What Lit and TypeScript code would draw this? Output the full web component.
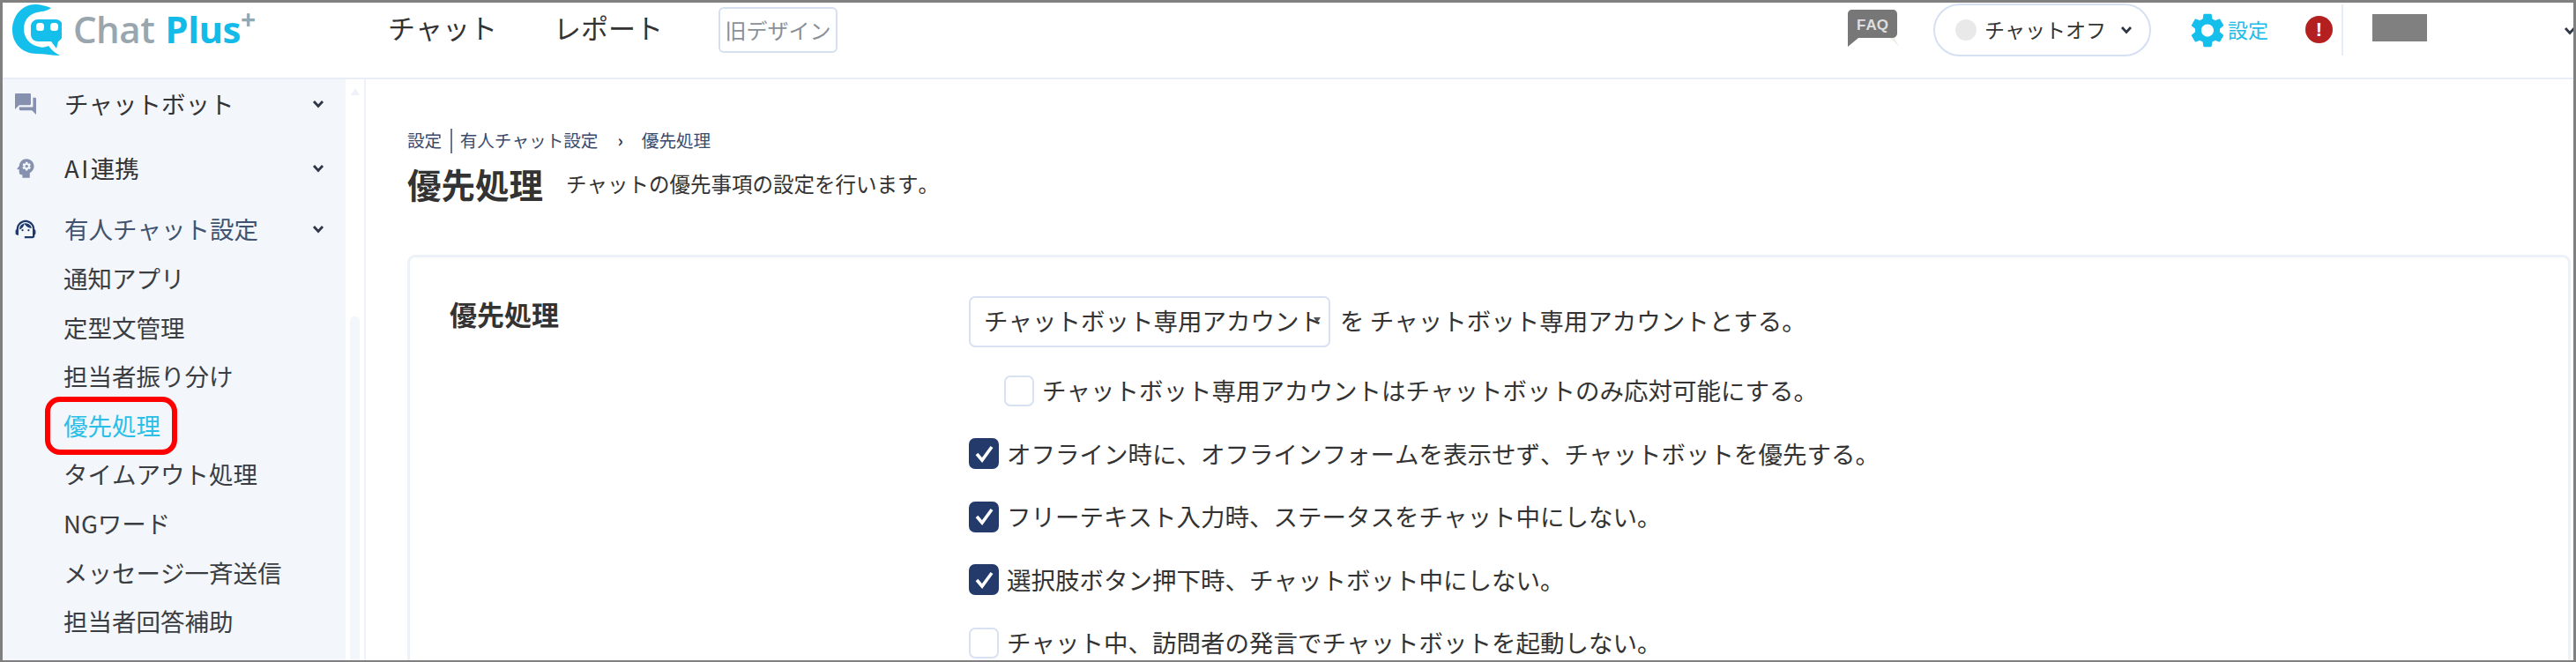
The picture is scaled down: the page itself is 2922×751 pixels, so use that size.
import { LitElement, html, css, svg } from "lit";
import { customElement } from "lit/decorators.js";

const chev = (cls = "") => html`<svg class="chev ${cls}" viewBox="0 0 14 10"><polyline points="2,2 7,7.5 12,2" fill="none" stroke="currentColor" stroke-width="2.8"/></svg>`;

const GEAR = "M19.14 12.94c.04-.3.06-.61.06-.94 0-.32-.02-.64-.07-.94l2.03-1.58c.18-.14.23-.41.12-.61l-1.92-3.32c-.12-.22-.37-.29-.59-.22l-2.39.96c-.5-.38-1.03-.7-1.62-.94l-.36-2.54c-.04-.24-.24-.41-.48-.41h-3.84c-.24 0-.43.17-.47.41l-.36 2.54c-.59.24-1.13.57-1.62.94l-2.39-.96c-.22-.08-.47 0-.59.22L2.74 8.87c-.12.21-.08.47.12.61l2.03 1.58c-.05.3-.09.63-.09.94s.02.64.07.94l-2.03 1.58c-.18.14-.23.41-.12.61l1.92 3.32c.12.22.37.29.59.22l2.39-.96c.5.38 1.03.7 1.62.94l.36 2.54c.05.24.24.41.48.41h3.84c.24 0 .44-.17.47-.41l.36-2.54c.59-.24 1.13-.56 1.62-.94l2.39.96c.22.08.47 0 .59-.22l1.92-3.32c.12-.22.07-.47-.12-.61l-2.01-1.58zM12 15.6c-1.98 0-3.6-1.62-3.6-3.6s1.62-3.6 3.6-3.6 3.6 1.62 3.6 3.6-1.62 3.6-3.6 3.6z";

const ICONS = {
  forum: svg`<path fill="#8591ae" d="M21 6h-2v9H6v2c0 .55.45 1 1 1h11l4 4V7c0-.55-.45-1-1-1zm-4 6V3c0-.55-.45-1-1-1H3c-.55 0-1 .45-1 1v14l4-4h10c.55 0 1-.45 1-1z"/>`,
  ai: svg`<path fill="#8591ae" d="M13 8.57c-.79 0-1.43.64-1.43 1.43s.64 1.43 1.43 1.43 1.43-.64 1.43-1.43-.64-1.43-1.43-1.43z"/><path fill="#8591ae" d="M13 3C9.25 3 6.2 5.94 6.02 9.64L4.1 12.2c-.25.33 0 .8.4.8H6v3c0 1.1.9 2 2 2h1v3h7v-4.68c2.36-1.12 4-3.53 4-6.32 0-3.87-3.13-7-7-7zm3 7c0 .13-.01.26-.02.39l.83.66c.08.06.1.16.05.25l-.8 1.39c-.05.09-.16.12-.24.09l-.99-.4c-.21.16-.43.29-.67.39L14 13.83c-.01.1-.1.17-.2.17h-1.6c-.1 0-.18-.07-.2-.17l-.15-1.06c-.25-.1-.47-.23-.68-.39l-.99.4c-.09.03-.2 0-.25-.09l-.8-1.39c-.05-.08-.03-.19.05-.25l.84-.66c-.01-.13-.02-.26-.02-.39s.02-.27.04-.39l-.85-.66c-.08-.06-.1-.16-.05-.26l.8-1.38c.05-.09.15-.12.24-.09l1 .4c.2-.15.43-.29.67-.39L12 6.17c.02-.1.1-.17.2-.17h1.6c.1 0 .18.07.2.17l.15 1.06c.24.1.46.23.67.39l1-.4c.09-.03.2 0 .24.09l.8 1.38c.05.09.03.2-.05.26l-.85.66c.03.12.04.25.04.39z"/>`,
  agent: svg`<path fill="#1f3a6b" d="M21 12.22C21 6.73 16.74 3 12 3c-4.69 0-9 3.65-9 9.28-.6.34-1 .98-1 1.72v2c0 1.1.9 2 2 2h1v-6.1c0-3.87 3.13-7 7-7s7 3.13 7 7V19h-8v2h8c1.1 0 2-.9 2-2v-1.22c.59-.31 1-.92 1-1.62v-2.3c0-.7-.41-1.31-1-1.64z"/><circle cx="9" cy="13" r="1" fill="#1f3a6b"/><circle cx="15" cy="13" r="1" fill="#1f3a6b"/><path fill="#1f3a6b" d="M18 11.03C17.52 8.18 15.04 6 12.05 6c-3.03 0-6.29 2.51-6.03 6.45 2.47-1.01 4.33-3.21 4.86-5.89 1.31 2.63 4 4.44 7.12 4.47z"/>`,
};

const SUB = ["通知アプリ", "定型文管理", "担当者振り分け", "優先処理", "タイムアウト処理", "NGワード", "メッセージ一斉送信", "担当者回答補助"];
const CHECKS: [string, boolean][] = [
  ["オフライン時に、オフラインフォームを表示せず、チャットボットを優先する。", true],
  ["フリーテキスト入力時、ステータスをチャット中にしない。", true],
  ["選択肢ボタン押下時、チャットボット中にしない。", true],
  ["チャット中、訪問者の発言でチャットボットを起動しない。", false],
];

@customElement("app-root")
export class AppRoot extends LitElement {
  static styles = css`
    :host {
      display: block; width: 2922px; height: 751px; box-sizing: border-box;
      border: 3px solid #808080; border-bottom-width: 2px; overflow: hidden; background: #fff;
      font-family: "Noto Sans CJK JP", "Noto Sans", sans-serif; color: #333;
      font-kerning: none; text-spacing-trim: space-all;
    }
    * { box-sizing: border-box; }
    .chev { display: block; width: 14px; height: 10px; color: #2f3747; flex: none; }

    header { display: flex; align-items: flex-start; height: 87px; border-bottom: 2px solid #e8edf6; flex: none; }
    .logo { display: flex; margin: 2px 0 0 11px; width: 426px; flex: none; }
    .logo svg { width: 56px; height: 58px; flex: none; }
    .logotext { margin: 2px 0 0 13px; font-family: "Open Sans", sans-serif; font-size: 42px; line-height: 52px; display: flex; align-items: flex-start; font-kerning: normal; letter-spacing: -0.5px; }
    .logotext .c { font-weight: 600; color: #9aa6ad; }
    .logotext .p { font-weight: 700; color: #14bbe8; margin-left: 12px; }
    .logotext .s { font-weight: 700; color: #8fa9b3; font-size: 30px; line-height: 30px; margin-top: 0; }
    .nav { font-size: 31px; line-height: 44px; margin-top: 6px; color: #333; flex: none; }
    .nav + .nav { margin-left: 64px; }
    .old { margin: 5px 0 0 63px; width: 135px; height: 52px; border: 2px solid #d5dff0; border-radius: 6px; font-size: 24px; line-height: 48px; text-align: center; color: #8a8f98; flex: none; }
    .faq { margin: 8px 0 0 auto; width: 58px; height: 42px; display: block; flex: none; }
    .pill { margin: 1px 0 0 39px; width: 247px; height: 60px; border: 2.5px solid #d5e0f2; border-radius: 30px; display: flex; align-items: center; padding-left: 23px; flex: none; }
    .dot { width: 24px; height: 24px; border-radius: 50%; background: #e9e9e9; flex: none; }
    .pill span { font-size: 23px; margin-left: 9px; line-height: 30px; margin-bottom: 2px; }
    .pill .chev { margin-left: 16px; }
    .gear { margin: 12px 0 0 44px; width: 40px; height: 39px; display: block; flex: none; }
    .set { margin: 10px 0 0 3px; font-size: 23px; line-height: 40px; color: #1cbdea; flex: none; }
    .alert { margin: 15px 0 0 42px; width: 31px; height: 31px; border-radius: 50%; background: #b3201f; color: #fff; font: 700 22px/31px "Liberation Sans", sans-serif; text-align: center; flex: none; }
    .div { margin: 2px 0 0 10px; width: 2px; height: 58px; background: #e8edf5; flex: none; }
    .user { margin: 13px 0 0 33px; width: 62px; height: 31px; background: #808080; flex: none; }
    .ucv { margin: 27px -3px 0 155px; }

    .body { display: flex; height: 660px; }
    aside { width: 389px; background: #f3f6fb; flex: none; }
    .grp { display: flex; align-items: center; height: 56px; font-size: 27.5px; color: #333; }
    .grp + .grp { margin-top: 17px; }
    .grp.g3 { margin-top: 13px; color: #41536f; }
    .grp .ic { width: 24px; height: 24px; margin-left: 14px; flex: none; display: block; }
    .grp .t { margin-left: 32px; flex: 1; white-space: nowrap; line-height: 40px; margin-bottom: 2px; }
    .grp .la { letter-spacing: 2.5px; }
    .grp .chev { margin-right: 24px; }
    .sub { height: 55.6px; padding-left: 69px; font-size: 27.5px; line-height: 55.6px; color: #3a3d42; white-space: nowrap; }
    .sub a { display: inline-block; position: relative; height: 55.6px; }
    .sub.on a { color: #2bbfe8; }
    .sub.on a::after { content: ""; position: absolute; left: -21px; right: -19px; top: -5px; bottom: -6px; border: 6px solid #f00; border-radius: 17px; }
    .scroll { width: 21px; flex: none; padding: 10px 5px 0; }
    .tri { width: 0; height: 0; margin: 0 auto; border: 5px solid transparent; border-top: 0; border-bottom: 8px solid #eef2f8; }
    .thumb { margin-top: 251px; height: 400px; background: #f3f6fb; border-radius: 5px; }
    main { flex: 1; border-left: 2px solid #eef1f8; padding: 54px 0 0 47px; min-width: 0; }
    .crumb { font-size: 19.6px; line-height: 30px; color: #3b4a6b; white-space: nowrap; display: flex; }
    .crumb .sep { width: 1.5px; height: 28px; background: #6a7590; margin: 2px 9px 0 10px; }
    .crumb .ar { margin: 0 21px 0 22px; font-weight: 700; color: #2f3a55; }
    .title { display: flex; align-items: center; margin-top: 9px; height: 50px; }
    h1 { margin: 0; font-size: 38.5px; font-weight: 700; line-height: 50px; color: #333; }
    .title p { margin: 0 0 0 26px; font-size: 23.5px; line-height: 50px; }
    .card { margin-top: 56px; width: 2454px; height: 600px; border: 3px solid #edf1f8; border-radius: 9px; padding: 44px 0 0 45px; display: flex; }
    .lab { width: 589px; font-size: 31px; font-weight: 700; line-height: 40px; flex: none; }
    .rows { flex: 1; }
    .selrow { display: flex; align-items: center; height: 58px; font-size: 27.5px; }
    .selwrap { position: relative; width: 410px; height: 58px; flex: none; }
    select { appearance: none; -webkit-appearance: none; width: 100%; height: 100%; border: 2.5px solid #d8e2f2; border-radius: 7px; background: #fff; padding: 0 6px 5px 15px; font: inherit; font-size: 27.5px; color: #333; outline: none; }
    .selwrap::after { content: ""; position: absolute; left: 391px; top: 24px; border: 4px solid transparent; border-top: 6px solid #555; }
    .selrow .after { margin: 0 0 5px 11px; white-space: pre; }
    .row { display: flex; align-items: center; height: 71.5px; font-size: 27.5px; white-space: nowrap; }
    .row span { margin-bottom: 2px; }
    .row.ind { margin-top: 13px; height: 72px; padding-left: 40px; }
    .cb { width: 34px; height: 35px; border-radius: 7px; border: 2.5px solid #d8e2f2; background: #fff; flex: none; margin-right: 9px; display: block; }
    .cb.on { background: #233a6b; border-color: #233a6b; }
    .cb svg { display: block; margin: -2.5px; width: 34px; height: 35px; }
  `;

  render() {
    return html`
      <header>
        <div class="logo">
          <svg viewBox="0 0 56 58">
            <path fill="#14bfec" d="M44 4C36 1 31 0 26 0 11 0 0 13 0 29c0 16 12 27 28 27 8 0 18 2 26 2-6-3-10-7-13-11-4 2-8 2-11 1-10-2-17-10-17-20 0-10 6-17 15-19 5-1 11-1 16-5z"/>
            <path fill="#14bfec" d="M29 17h20c4 0 8 3 8 7v10c0 4-3 7-5 8l-2 8-6-8H29c-4 0-8-3-8-8V25c0-5 4-8 8-8z"/>
            <rect x="27" y="21" width="9" height="9" rx="3.5" fill="#fff"/>
            <rect x="43" y="21" width="9" height="9" rx="3.5" fill="#fff"/>
          </svg>
          <div class="logotext"><span class="c">Chat</span><span class="p">Plus</span><span class="s">+</span></div>
        </div>
        <div class="nav">チャット</div>
        <div class="nav">レポート</div>
        <div class="old">旧デザイン</div>
        <svg class="faq" viewBox="0 0 58 42">
          <path fill="#f0efe8" d="M10 30h42l6 12-10-10H12z"/>
          <path fill="#777" d="M5 0h46c3 0 5 2 5 5v22c0 2-2 5-5 5H12L0 42V5c0-3 2-5 5-5z"/>
          <text x="28" y="23" text-anchor="middle" font-family="Liberation Sans" font-weight="700" font-size="17" fill="#dedede">FAQ</text>
        </svg>
        <div class="pill"><i class="dot"></i><span>チャットオフ</span>${chev()}</div>
        <svg class="gear" viewBox="2.6 2 18.8 20"><path fill="#14bfec" d="${GEAR}"/></svg>
        <div class="set">設定</div>
        <div class="alert">!</div>
        <div class="div"></div>
        <div class="user"></div>
        ${chev("ucv")}
      </header>
      <div class="body">
        <aside>
          <div class="grp"><svg class="ic" viewBox="2 2 20 20">${ICONS.forum}</svg><span class="t">チャットボット</span>${chev()}</div>
          <div class="grp"><svg class="ic" viewBox="2 2 20 20">${ICONS.ai}</svg><span class="t"><span class="la">AI</span>連携</span>${chev()}</div>
          <div class="grp g3"><svg class="ic" viewBox="1.5 2 21 20">${ICONS.agent}</svg><span class="t">有人チャット設定</span>${chev()}</div>
          ${SUB.map((s) => html`<div class="sub ${s === "優先処理" ? "on" : ""}"><a>${s}</a></div>`)}
        </aside>
        <div class="scroll"><div class="tri"></div><div class="thumb"></div></div>
        <main>
          <div class="crumb"><span>設定</span><i class="sep"></i><span>有人チャット設定</span><span class="ar">›</span><span>優先処理</span></div>
          <div class="title"><h1>優先処理</h1><p>チャットの優先事項の設定を行います。</p></div>
          <section class="card">
            <div class="lab">優先処理</div>
            <div class="rows">
              <div class="selrow">
                <div class="selwrap"><select><option>チャットボット専用アカウント</option></select></div>
                <span class="after">を チャットボット専用アカウントとする。</span>
              </div>
              <div class="row ind"><i class="cb"></i><span>チャットボット専用アカウントはチャットボットのみ応対可能にする。</span></div>
              ${CHECKS.map(([t, on]) => html`<div class="row"><i class="cb ${on ? "on" : ""}">${on ? html`<svg viewBox="0 0 34 35"><polyline points="9,18 15,25 26,10" fill="none" stroke="#fff" stroke-width="3.6"/></svg>` : ""}</i><span>${t}</span></div>`)}
            </div>
          </section>
        </main>
      </div>
    `;
  }
}
